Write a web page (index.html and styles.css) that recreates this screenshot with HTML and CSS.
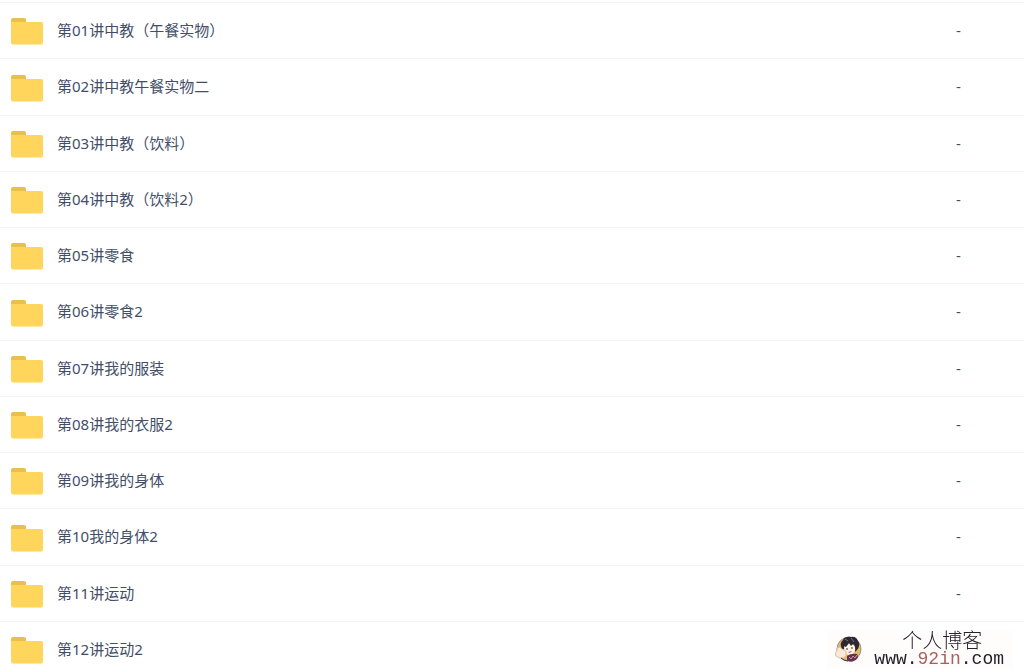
FILE: index.html
```html
<!DOCTYPE html>
<html lang="zh-CN">
<head>
    <meta charset="UTF-8">
    <meta name="viewport" content="width=device-width, initial-scale=1.0">
    <title>个人博客</title>
    <link rel="stylesheet" href="styles.css">
</head>
<body>
    <svg class="sprite" aria-hidden="true">
        <symbol id="folder" viewBox="0 0 32 27">
            <path d="M0 10V2Q0 0 2 0H13Q15 0 15 2V10Z" fill="#e9c04c"/>
            <path d="M0 4H30Q32 4 32 6V25Q32 27 30 27H2Q0 27 0 25Z" fill="#ffe9a8"/>
            <path d="M0 4H30Q32 4 32 6V24Q32 26 30 26H2Q0 26 0 24Z" fill="#ffd55c"/>
        </symbol>
    </svg>

    <table class="file-list">
        <tbody>
            <tr class="file"><td class="name"><a href="#"><svg class="folder"><use href="#folder"/></svg><span class="label">第01讲中教（午餐实物）</span></a></td><td class="size">-</td></tr>
            <tr class="file"><td class="name"><a href="#"><svg class="folder"><use href="#folder"/></svg><span class="label">第02讲中教午餐实物二</span></a></td><td class="size">-</td></tr>
            <tr class="file"><td class="name"><a href="#"><svg class="folder"><use href="#folder"/></svg><span class="label">第03讲中教（饮料）</span></a></td><td class="size">-</td></tr>
            <tr class="file"><td class="name"><a href="#"><svg class="folder"><use href="#folder"/></svg><span class="label">第04讲中教（饮料2）</span></a></td><td class="size">-</td></tr>
            <tr class="file"><td class="name"><a href="#"><svg class="folder"><use href="#folder"/></svg><span class="label">第05讲零食</span></a></td><td class="size">-</td></tr>
            <tr class="file"><td class="name"><a href="#"><svg class="folder"><use href="#folder"/></svg><span class="label">第06讲零食2</span></a></td><td class="size">-</td></tr>
            <tr class="file"><td class="name"><a href="#"><svg class="folder"><use href="#folder"/></svg><span class="label">第07讲我的服装</span></a></td><td class="size">-</td></tr>
            <tr class="file"><td class="name"><a href="#"><svg class="folder"><use href="#folder"/></svg><span class="label">第08讲我的衣服2</span></a></td><td class="size">-</td></tr>
            <tr class="file"><td class="name"><a href="#"><svg class="folder"><use href="#folder"/></svg><span class="label">第09讲我的身体</span></a></td><td class="size">-</td></tr>
            <tr class="file"><td class="name"><a href="#"><svg class="folder"><use href="#folder"/></svg><span class="label">第10我的身体2</span></a></td><td class="size">-</td></tr>
            <tr class="file"><td class="name"><a href="#"><svg class="folder"><use href="#folder"/></svg><span class="label">第11讲运动</span></a></td><td class="size">-</td></tr>
            <tr class="file"><td class="name"><a href="#"><svg class="folder"><use href="#folder"/></svg><span class="label">第12讲运动2</span></a></td><td class="size"></td></tr>
        </tbody>
    </table>

    <div class="watermark">
        <svg class="avatar" viewBox="0 0 28 28" aria-hidden="true">
            <circle cx="15" cy="14" r="12" fill="#e3b962"/>
            <circle cx="15" cy="14" r="12" fill="none" stroke="#9b8f8c"/>
            <path d="M10 15Q10 9 16 9Q22 9 21 15Q20 20 15 20Q10 19 10 15Z" fill="#fff3ea"/>
            <path d="M8 14Q5 8 9 5Q11 1 17 2Q22 1 24 6Q27 10 23 15L21 17Q22 11 19 9L17 11L15 8L12 12L10 11L10 16Z" fill="#2c2832"/>
            <path d="M11 4L14 6M17 3L20 7" stroke="#776c83" fill="none"/>
            <path d="M12 14H14M17 13H19" stroke="#352b36" fill="none"/>
            <path d="M14 17Q16 19 18 16Z" fill="#a64e5a"/>
            <path d="M13 21Q17 18 23 19Q26 23 20 26Q16 28 13 25Z" fill="#64324f"/>
            <path d="M15 22L17 24L19 21L21 23L23 20" stroke="#c894a8" fill="none"/>
            <path d="M3 13Q6 11 8 14L12 16Q13 21 10 23Q5 24 2 21Q0 18 3 16Z" fill="#fae9d8" stroke="#d9bea2"/>
            <path d="M7 23Q10 26 14 26" stroke="#383440" fill="none"/>
        </svg>
        <div class="site">
            <span class="site-name">个人博客</span>
            <span class="site-url">www.<span class="site-host">92in</span>.com</span>
        </div>
    </div>
</body>
</html>
```
FILE: styles.css
```css
html {
    scrollbar-width: none;
}
body {
    margin: 0;
    padding-top: 2px;
    background: #fff;
    color: #424e67;
    font-family: "Noto Sans", "Noto Sans CJK SC", sans-serif;
    font-size: 15px;
    line-height: 20px;
}
.sprite {
    position: absolute;
    width: 0;
    height: 0;
}
.file-list {
    width: 100%;
    border-collapse: separate;
    border-spacing: 0;
}
.file {
    height: 56px;
}
.file:nth-child(4n+2) {
    height: 57px;
}
.file td {
    padding: 0;
    border-top: 1px solid #f1f3fa;
    vertical-align: middle;
}
.file .name {
    padding-top: 2px;
    padding-left: 11px;
}
.name a {
    display: flex;
    align-items: center;
    gap: 14px;
    color: inherit;
    text-decoration: none;
}
.label {
    padding-bottom: 4px;
}
.folder {
    width: 32px;
    height: 27px;
}
.file .size {
    width: 68px;
    padding-bottom: 2px;
}
.watermark {
    position: fixed;
    right: 10px;
    bottom: 4px;
    display: flex;
    align-items: center;
    gap: 12px;
    padding: 0 10px 0 8px;
    background: #fffdfc;
    color: #26212b;
}
.avatar {
    width: 28px;
    height: 28px;
}
.site {
    display: flex;
    flex-direction: column;
    align-items: center;
}
.site-name {
    padding-left: 6px;
    font-family: "Noto Sans CJK SC", sans-serif;
    font-size: 20px;
    font-weight: 300;
    line-height: 20px;
}
.site-url {
    font-family: "Liberation Mono", monospace;
    font-size: 18px;
    line-height: 18px;
}
.site-host {
    color: #a8605c;
}
```
